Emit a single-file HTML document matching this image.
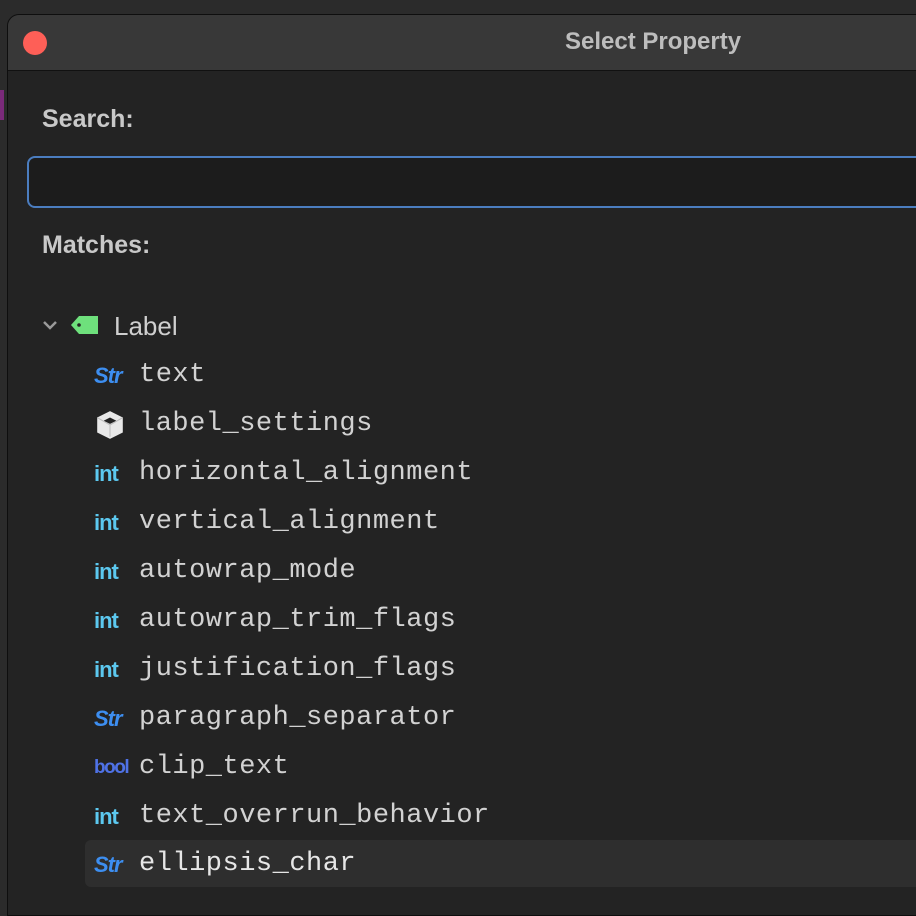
<!DOCTYPE html>
<html><head><style>
body{margin:0;width:916px;height:886px;overflow:hidden;background:#2b2b2b;font-family:"Liberation Sans",sans-serif;position:relative}
.win{position:absolute;left:7px;top:14px;width:940px;height:900px;background:#232323;border-radius:12px 0 0 0;border:1px solid #0e0e0e;overflow:hidden}
.tb{height:55px;background:#383838;border-bottom:1px solid #111;position:relative}
.dot{position:absolute;left:15px;top:16px;width:24px;height:24px;border-radius:50%;background:#fe5f57}
.title{position:absolute;left:557px;top:13px;font-weight:bold;font-size:24px;color:#bdbdbd}
.lbl{position:absolute;font-weight:bold;font-size:25px;color:#c8c8c8}
.inp{position:absolute;left:19px;top:141px;width:920px;height:48px;border:2px solid #4b7dbf;border-radius:8px;background:#1c1c1c}
.row{position:absolute;left:0;height:47px;width:940px}
.row .t{position:absolute;left:131px;top:9px;font-family:"Liberation Mono",monospace;font-size:27px;letter-spacing:0.5px;color:#d2d2d2}
.ic{position:absolute;left:86px;top:12px;font-weight:bold;font-size:22px;letter-spacing:-1px}
.str{color:#3d8ef0;font-style:italic}
.int{color:#5cc8ef}
.bool{color:#4f72e6;font-size:19px;top:14px;letter-spacing:-1.5px}
</style></head><body>
<div style="position:absolute;left:0;top:90px;width:4px;height:30px;background:#7a2a7a"></div>
<div class="win">
<div class="tb"><div class="dot"></div><div class="title">Select Property</div></div>
<div class="lbl" style="left:34px;top:90px">Search:</div>
<div class="inp"></div>
<div class="lbl" style="left:34px;top:216px">Matches:</div>
<svg style="position:absolute;left:33px;top:304px" width="18" height="14"><path d="M3 3 L9 9 L15 3" stroke="#9a9a9a" stroke-width="2.5" fill="none"/></svg>
<svg style="position:absolute;left:62px;top:299px" width="30" height="22"><path d="M9 2 H28 V20 H9 L1 11 Z" fill="#6ee07c"/><circle cx="9" cy="11" r="1.8" fill="#232323"/></svg>
<div style="position:absolute;left:106px;top:296px;font-size:26px;color:#cfcfcf">Label</div>
<div class="row" style="top:336px"><span class="ic str">Str</span><span class="t">text</span></div>
<div class="row" style="top:385px"><svg class="ic" style="left:86px;top:9px" width="32" height="32" viewBox="0 0 30 30"><path d="M15 2 L27 8 V22 L15 28 L3 22 V8 Z" fill="#e8e8e8"/><path d="M15 8 L21 11 L15 14 L9 11 Z" fill="#232323"/><path d="M15 15 V26 M3 8 L15 15 L27 8" stroke="#bdbdbd" stroke-width="1" fill="none"/></svg><span class="t">label_settings</span></div>
<div class="row" style="top:434px"><span class="ic int">int</span><span class="t">horizontal_alignment</span></div>
<div class="row" style="top:483px"><span class="ic int">int</span><span class="t">vertical_alignment</span></div>
<div class="row" style="top:532px"><span class="ic int">int</span><span class="t">autowrap_mode</span></div>
<div class="row" style="top:581px"><span class="ic int">int</span><span class="t">autowrap_trim_flags</span></div>
<div class="row" style="top:630px"><span class="ic int">int</span><span class="t">justification_flags</span></div>
<div class="row" style="top:679px"><span class="ic str">Str</span><span class="t">paragraph_separator</span></div>
<div class="row" style="top:728px"><span class="ic bool">bool</span><span class="t">clip_text</span></div>
<div class="row" style="top:777px"><span class="ic int">int</span><span class="t">text_overrun_behavior</span></div>
<div class="row" style="top:825px;left:77px;background:#2e2e2e;border-radius:6px"><span class="ic str" style="left:9px">Str</span><span class="t" style="left:54px;color:#e6e6e6">ellipsis_char</span></div>
</div>
</body></html>
